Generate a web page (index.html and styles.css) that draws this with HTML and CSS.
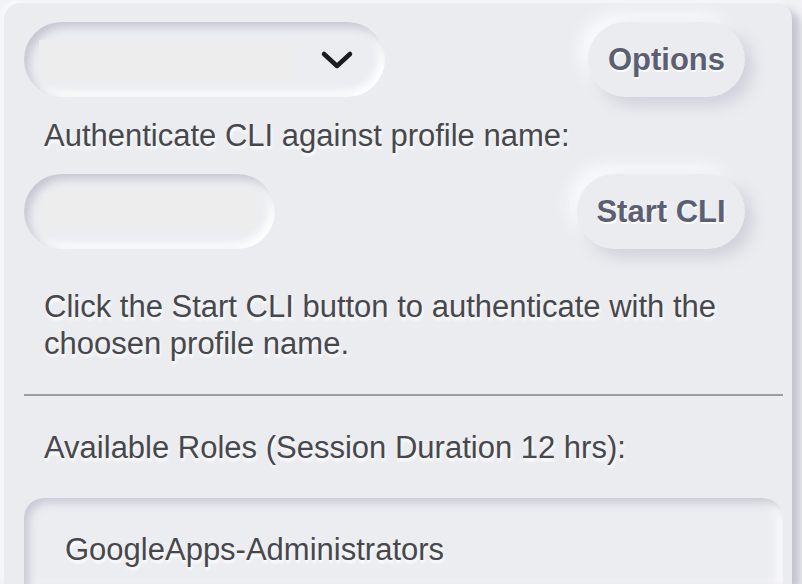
FILE: index.html
```html
<!DOCTYPE html>
<html>
<head>
<meta charset="utf-8">
<link rel="stylesheet" href="styles.css">
</head>
<body>
<div class="panel">
  <div class="row row-top">
    <div class="select-well">
      <div class="select-box"></div>
      <svg class="chevron" width="34" height="22" viewBox="0 0 34 22"><path d="M4 5 L17 17 L30 5" fill="none" stroke="#1c1c1e" stroke-width="4.5" stroke-linecap="round" stroke-linejoin="round"/></svg>
    </div>
    <button class="neu-btn btn-options">Options</button>
  </div>
  <p class="label">Authenticate CLI against profile name:</p>
  <div class="row row-cli">
    <div class="input-well">
      <div class="input-box"></div>
    </div>
    <button class="neu-btn btn-cli">Start CLI</button>
  </div>
  <p class="help">Click the Start CLI button to authenticate with the choosen profile name.</p>
  <hr class="divider">
  <p class="roles-title">Available Roles (Session Duration 12 hrs):</p>
  <div class="roles-box">
    <div class="role">GoogleApps-Administrators</div>
  </div>
</div>
</body>
</html>
```
FILE: styles.css
```css
html, body {
  margin: 0;
  padding: 0;
  background: #f2f2f5;
  overflow: hidden;
  height: 584px;
}
body {
  font-family: "Liberation Sans", Arial, sans-serif;
}
.panel {
  margin: 3px 0 0 4px;
  width: 788px;
  height: 581px;
  box-sizing: border-box;
  padding: 19px 9px 0 20px;
  background: #ebecf0;
  border-radius: 16px 16px 0 0;
  box-shadow: 8px 6px 8px #c3c4d0, -3px -3px 6px #fafafc;
}
.row {
  display: flex;
  justify-content: space-between;
  align-items: center;
  height: 75px;
}
.select-well {
  width: 361px;
  height: 75px;
  border-radius: 38px;
  background: #ecedf1;
  box-shadow: inset 5px 5px 8px #c6c7d2, inset -5px -5px 8px #ffffff;
  display: flex;
  align-items: center;
}
.select-box {
  margin-left: 15px;
  width: 253px;
  height: 40px;
  background: #ededed;
}
.chevron {
  margin-left: 28px;
}
.input-well {
  width: 251px;
  height: 75px;
  border-radius: 38px;
  background: #ecedf1;
  box-shadow: inset 5px 5px 8px #c6c7d2, inset -5px -5px 8px #ffffff;
  display: flex;
  align-items: center;
}
.input-box {
  margin-left: 19px;
  width: 213px;
  height: 36px;
  background: #ededed;
}
.neu-btn {
  height: 75px;
  border: none;
  border-radius: 38px;
  background: #ebecf0;
  font-family: "Liberation Sans", Arial, sans-serif;
  font-weight: bold;
  font-size: 31px;
  color: #5c5f72;
  text-shadow: 1px 2px 1px #ffffff;
  padding: 0;
  white-space: nowrap;
  margin-right: 38px;
  box-shadow: 8px 8px 16px #cfd0da, -8px -8px 16px #fbfbfd;
}
.btn-options { width: 157px; }
.btn-cli { width: 168px; }
.label, .help, .roles-title {
  margin: 0;
  padding-left: 20px;
  font-size: 31px;
  line-height: 37px;
  color: #47484d;
  text-shadow: 1px 3px 3px #ffffff;
}
.label { margin: 20px 0 20px; }
.help { margin: 39px 0 0; padding-right: 40px; }
.divider {
  margin: 32px 0 0;
  border: none;
  height: 2px;
  background: #9d9d9f;
}
.roles-title { margin: 33px 0 0; }
.roles-box {
  margin-top: 32px;
  height: 86px;
  border-radius: 20px 20px 0 0;
  background: #ecedf1;
  box-shadow: inset 5px 5px 8px #c9cad5, inset -6px 0 8px #fbfbfd;
  padding: 33px 0 0 41px;
  box-sizing: border-box;
}
.role {
  font-size: 31px;
  line-height: 37px;
  color: #47484d;
  text-shadow: 1px 3px 3px #ffffff;
}
```
